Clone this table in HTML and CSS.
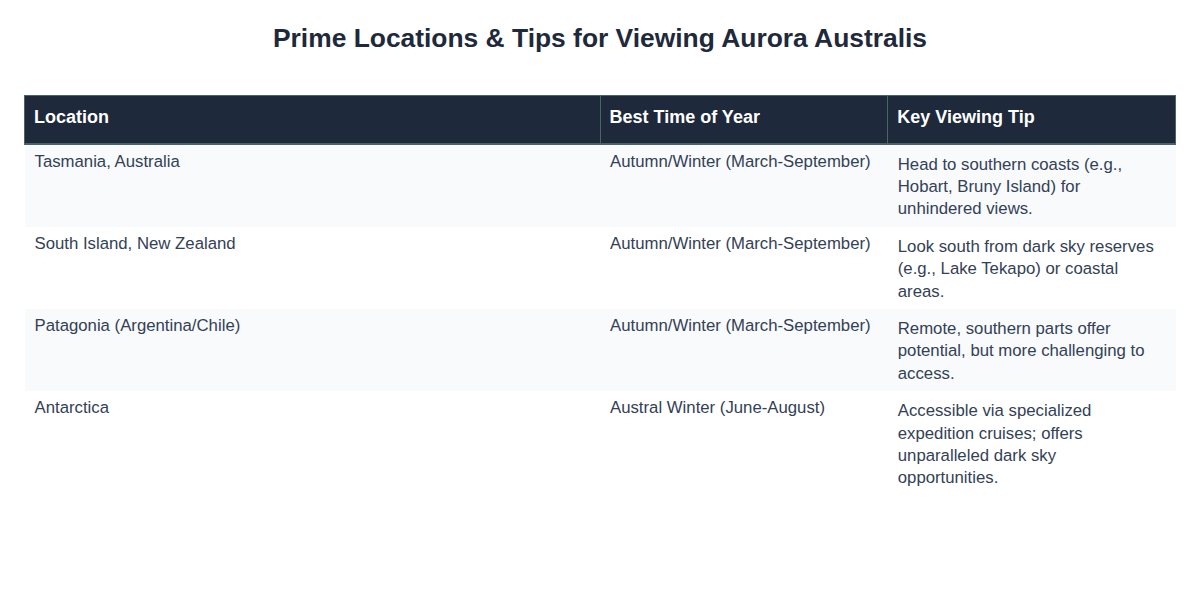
FILE: index.html
```html
<!DOCTYPE html>
<html lang="en">
<head>
<meta charset="utf-8">
<title>Prime Locations &amp; Tips for Viewing Aurora Australis</title>
<link rel="stylesheet" href="styles.css">
</head>
<body>
<main class="page">
  <h1 class="title">Prime Locations &amp; Tips for Viewing Aurora Australis</h1>
  <table class="aurora">
    <colgroup>
      <col class="c-loc">
      <col class="c-time">
      <col class="c-tip">
    </colgroup>
    <thead>
      <tr>
        <th>Location</th>
        <th>Best Time of Year</th>
        <th>Key Viewing Tip</th>
      </tr>
    </thead>
    <tbody>
      <tr>
        <td class="loc">Tasmania, Australia</td>
        <td class="time">Autumn/Winter (March-September)</td>
        <td class="tip">Head to southern coasts (e.g., Hobart, Bruny Island) for unhindered views.</td>
      </tr>
      <tr>
        <td class="loc">South Island, New Zealand</td>
        <td class="time">Autumn/Winter (March-September)</td>
        <td class="tip">Look south from dark sky reserves (e.g., Lake Tekapo) or coastal areas.</td>
      </tr>
      <tr>
        <td class="loc">Patagonia (Argentina/Chile)</td>
        <td class="time">Autumn/Winter (March-September)</td>
        <td class="tip">Remote, southern parts offer potential, but more challenging to access.</td>
      </tr>
      <tr>
        <td class="loc">Antarctica</td>
        <td class="time">Austral Winter (June-August)</td>
        <td class="tip">Accessible via specialized expedition cruises; offers unparalleled dark sky opportunities.</td>
      </tr>
    </tbody>
  </table>
</main>
</body>
</html>
```

FILE: styles.css
```css
html, body {
  margin: 0;
  padding: 0;
  background: #ffffff;
}

body {
  font-family: "Liberation Sans", Arial, sans-serif;
  color: #334155;
}

.page {
  padding: 23px 24px 24px;
}

.title {
  margin: 0 0 41px;
  font-size: 26.4px;
  line-height: 31px;
  font-weight: 700;
  text-align: center;
  color: #1e293b;
}

.aurora {
  width: 100%;
  border-collapse: collapse;
  table-layout: fixed;
}

.c-loc { width: 50%; }
.c-time { width: 25%; }
.c-tip { width: 25%; }

.aurora th {
  background: #1e293b;
  color: #ffffff;
  font-size: 18px;
  font-weight: 700;
  line-height: 1.2;
  text-align: left;
  padding: 11px 9px 14px;
  border: 1px solid #4a6466;
  border-bottom-width: 2px;
}

.aurora td {
  font-size: 16.75px;
  line-height: 22.4px;
  vertical-align: top;
  padding: 6px 10px 6px;
  border: none;
}

.aurora td.tip {
  padding: 9px 16px 6px 10px;
}

.aurora tbody tr:nth-child(odd) {
  background: #f8fafc;
}

.aurora tbody tr:nth-child(even) {
  background: #ffffff;
}
```
